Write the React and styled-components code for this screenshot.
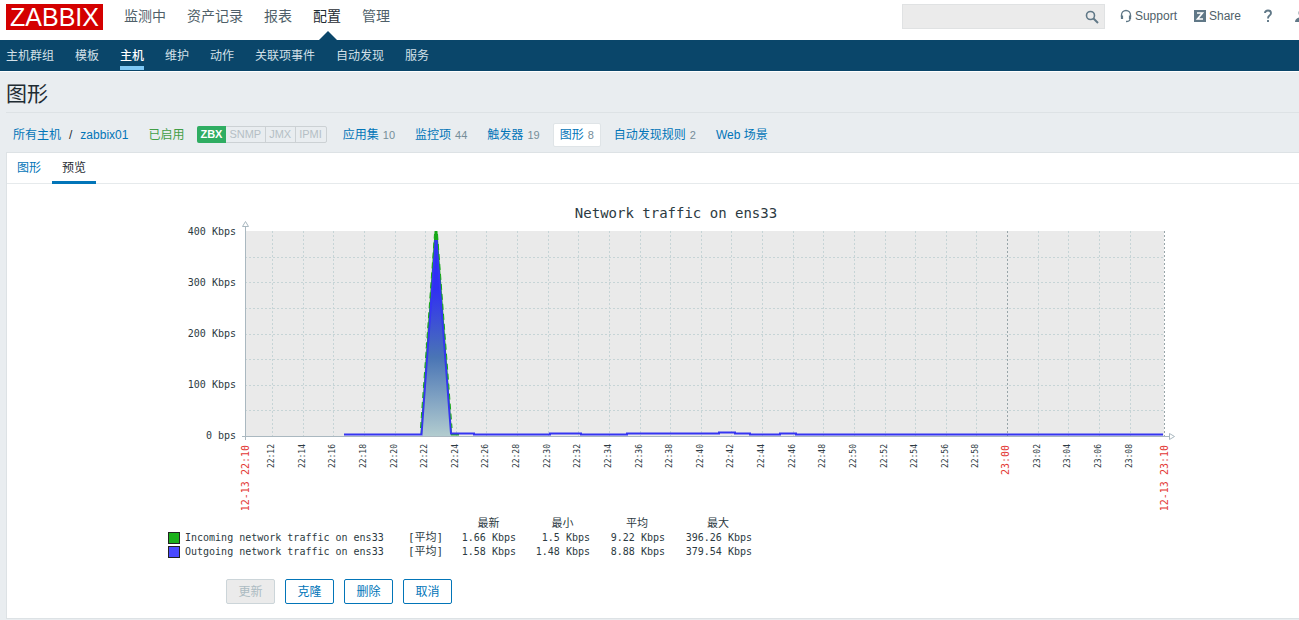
import React from "react";
import styled, { createGlobalStyle } from "styled-components";

const GlobalStyle = createGlobalStyle`
  * { box-sizing: border-box; }
  body {
    margin: 0;
    background: #e9edf0;
    color: #1f2c33;
    font: 12px/18px "Liberation Sans", "Noto Sans CJK SC", sans-serif;
    overflow-x: hidden;
  }
  a { color: #0275b8; text-decoration: none; }
  ul { list-style: none; margin: 0; padding: 0; }
`;

const TopBar = styled.header`
  display: flex;
  align-items: flex-start;
  height: 40px;
  padding: 4px 0 0 6px;
  background: #fff;
  overflow: hidden;
`;

const Logo = styled.a`
  width: 97px;
  height: 26px;
  background: #d40000;
  color: #fff;
  font-size: 25px;
  line-height: 27px;
  text-align: center;
`;

const MainNav = styled.nav`
  margin-left: 21px;
  flex: 1;
  ul { display: flex; gap: 21px; }
`;

const MainItem = styled.li`
  position: relative;
  height: 36px;
  font-size: 14px;
  line-height: 25px;
  white-space: nowrap;
  a { color: ${(p) => (p.$active ? "#1f2c33" : "#4f5f69")}; }
  ${(p) =>
    p.$active &&
    `&::after {
      content: "";
      position: absolute;
      left: 6px;
      bottom: 0;
      border: solid transparent;
      border-width: 0 9px 9px;
      border-bottom-color: #0a466a;
    }`}
`;

const SearchForm = styled.form`
  display: flex;
  width: 203px;
  height: 25px;
  background: #ebebeb;
  border: 1px solid #e0e2e3;
`;

const SearchInput = styled.input`
  flex: 1;
  min-width: 0;
  border: 0;
  background: transparent;
  outline: 0;
  font: inherit;
`;

const IconButton = styled.button`
  display: flex;
  align-items: center;
  border: 0;
  padding: 0 5px;
  background: transparent;
`;

const Tools = styled.div`
  display: flex;
  align-items: center;
  height: 24px;
  margin: 0 -9px 0 15px;
`;

const ToolLink = styled.a`
  display: flex;
  align-items: center;
  gap: 3px;
  margin-right: ${(p) => p.$gap}px;
  color: #4f5f69;
`;

const SubNav = styled.nav`
  background: #0a466a;
  border-bottom: 1px solid #fff;
  padding-left: 6px;
  ul { display: flex; gap: 21px; }
`;

const SubItem = styled.li`
  a {
    display: block;
    height: 31px;
    line-height: 32px;
    color: ${(p) => (p.$active ? "#fff" : "#d3e0e8")};
    font-weight: ${(p) => (p.$active ? 500 : 400)};
    white-space: nowrap;
    background: ${(p) =>
      p.$active ? "linear-gradient(#7fc8f5, #7fc8f5) 0 26px / 100% 4px no-repeat" : "none"};
  }
`;

const Title = styled.h1`
  margin: 0 0 0 6px;
  height: 41px;
  font-size: 21px;
  font-weight: 400;
  line-height: 43px;
  border-bottom: 1px solid #dde2e5;
`;

const HostBar = styled.div`
  display: flex;
  align-items: center;
  height: 39px;
  padding: 4px 0 0 7px;
  white-space: nowrap;
`;

const HostItem = styled.div`
  height: 24px;
  line-height: 22px;
  padding: 0 6px;
  margin-right: ${(p) => p.$gap}px;
  border: 1px solid ${(p) => (p.$active ? "#dfe4e7" : "transparent")};
  border-radius: 2px;
  background: ${(p) => (p.$active ? "#fff" : "transparent")};
  &:first-child { padding-left: 5px; }
`;

const Slash = styled.span`
  margin: 0 8px;
`;

const Enabled = styled.span`
  color: #429e47;
`;

const Count = styled.span`
  margin-left: 4px;
  color: #768d99;
  font-size: 11px;
`;

const Badges = styled.div`
  display: flex;
  height: 17px;
  margin-right: 9px;
  border: 1px solid #ccd1d4;
  border-radius: 2px;
`;

const Badge = styled.span`
  margin: ${(p) => (p.$on ? "-1px 0 -1px -1px" : "0")};
  padding: 0 4px 0 3px;
  line-height: ${(p) => (p.$on ? 17 : 15)}px;
  font-size: 11px;
  color: ${(p) => (p.$on ? "#fff" : "#b5bfc5")};
  background: ${(p) => (p.$on ? "#2fad62" : "transparent")};
  font-weight: ${(p) => (p.$on ? 700 : 400)};
  border-radius: 2px 0 0 2px;
  & + & + & { border-left: 1px solid #ccd1d4; border-radius: 0; }
`;

const Panel = styled.main`
  margin-left: 6px;
  background: #fff;
  border: 1px solid #dde2e5;
  border-right: 0;
`;

const Tabs = styled.ul`
  display: flex;
  gap: 1px;
  height: 31px;
  border-bottom: 1px solid #e6eaec;
`;

const Tab = styled.li`
  a {
    display: block;
    height: 31px;
    padding: 0 10px;
    line-height: 30px;
    color: ${(p) => (p.$active ? "#1f2c33" : "#0275b8")};
    border-bottom: ${(p) => (p.$active ? "3px solid #0275b8" : "0")};
  }
`;

const Figure = styled.figure`
  width: 1060px;
  margin: 0 auto;
  padding-top: 16px;
  svg { display: block; }
  text, table { font-family: "DejaVu Sans Mono", "Noto Sans CJK SC", monospace; }
`;

const Legend = styled.table`
  table-layout: fixed;
  width: 584px;
  margin: 5px 0 0 45px;
  border-collapse: collapse;
  font-size: 10px;
  line-height: 14px;
  color: #2c3a42;
  white-space: nowrap;
  th, td { padding: 0; height: 14px; font-weight: 400; text-align: right; }
  thead th { padding-left: 19px; text-align: center; font-size: 11px; }
  tbody th { text-align: left; }
  td:nth-child(2) { text-align: left; font-size: 11px; }
`;

const Swatch = styled.span`
  display: inline-block;
  width: 12px;
  height: 12px;
  margin-right: 5px;
  vertical-align: middle;
  border: 1px solid #222;
  background: ${(p) => p.$color};
`;

const Actions = styled.div`
  display: flex;
  gap: 10px;
  padding: 20px 0 14px 219px;
`;

const Button = styled.button`
  width: 49px;
  height: 25px;
  padding: 0;
  font: inherit;
  color: #0275b8;
  background: #fff;
  border: 1px solid #0275b8;
  border-radius: 2px;
  &:disabled {
    color: #acbbc2;
    background: #ebebeb;
    border-color: #ccd5d9;
  }
`;

const mainItems = ["监测中", "资产记录", "报表", "配置", "管理"];
const subItems = ["主机群组", "模板", "主机", "维护", "动作", "关联项事件", "自动发现", "服务"];
const hostLinks = [
  ["应用集", 10],
  ["监控项", 44],
  ["触发器", 19],
  ["图形", 8],
  ["自动发现规则", 2],
  ["Web 场景", null],
];
const series = [
  ["Incoming network traffic on ens33", "#1ab01a", "1.66 Kbps", "1.5 Kbps", "9.22 Kbps", "396.26 Kbps"],
  ["Outgoing network traffic on ens33", "#4a4aff", "1.58 Kbps", "1.48 Kbps", "8.88 Kbps", "379.54 Kbps"],
];

const plot = { left: 122, right: 1041, top: 31, bottom: 236 };
const ticks = Array.from({ length: 29 }, (_, i) => {
  const minutes = 12 + i * 2;
  const hour = 22 + Math.floor(minutes / 60);
  return {
    x: Math.round(149 + (i * 735) / 24),
    label: `${hour}:${String(minutes % 60).padStart(2, "0")}`,
    major: minutes === 60,
  };
});
const rows = Array.from({ length: 8 }, (_, i) => Math.round(plot.bottom - ((i + 1) * 205) / 8));

function TimeLabel({ x, major, children }) {
  return (
    <text
      transform={`translate(${x} ${major ? 245 : 244}) rotate(-90)`}
      textAnchor="end"
      fontSize={major ? 10 : 8}
      fill={major ? "#e33734" : "#2c3a42"}
    >
      {children}
    </text>
  );
}

function Chart() {
  return (
    <svg width="1060" height="312" viewBox="0 0 1060 312" role="img" aria-label="Network traffic on ens33">
      <defs>
        <linearGradient id="fill" x1="0" y1="40" x2="0" y2="236" gradientUnits="userSpaceOnUse">
          <stop offset="0" stopColor="#2d2dff" />
          <stop offset="0.25" stopColor="#3030f2" />
          <stop offset="0.6" stopColor="#4a75b5" />
          <stop offset="1" stopColor="#b2cccf" />
        </linearGradient>
      </defs>
      <text x="553" y="18" textAnchor="middle" fontSize="14" fill="#2c3a42">
        Network traffic on ens33
      </text>
      <rect x={plot.left} y={plot.top} width="919" height="205" fill="#eaeaea" />
      <g stroke="#c6d4d6" strokeDasharray="2 2" shapeRendering="crispEdges">
        {rows.slice(0, 7).map((y) => (
          <line key={y} x1={plot.left} x2={plot.right} y1={y + 0.5} y2={y + 0.5} />
        ))}
        {ticks.map((t) => (
          <line
            key={t.x}
            x1={t.x + 0.5}
            x2={t.x + 0.5}
            y1={plot.top}
            y2={plot.bottom}
            stroke={t.major ? "#98a5a9" : undefined}
          />
        ))}
        <line x1="1041.5" x2="1041.5" y1="31" y2="236" stroke="#98a5a9" />
      </g>
      {["400 Kbps", "300 Kbps", "200 Kbps", "100 Kbps", "0 bps"].map((label, i) => (
        <text key={label} x="113" y={35 + i * 51} textAnchor="end" fontSize="10" fill="#2c3a42">
          {label}
        </text>
      ))}
      <path
        d="M298.500 234 L312.500 32 H313.500 L328 234.500 H336"
        fill="none"
        stroke="#16a816"
        strokeWidth="2"
      />
      <path d="M299 236 L311.500 40 H314.500 L328 236Z" fill="url(#fill)" />
      <path
        d="M221 234.500 H298.500 L312.500 41 H313.500 L328 233.500 H351 V234.500 H427 V233.500 H458 V234.500 H504 V233.500 H596 V232.500 H612 V233.500 H627 V234.500 H657 V233.500 H673 V234.500 H1040"
        fill="none"
        stroke="#3535f2"
        strokeWidth="2"
      />
      <path
        d="M297.500 228 L311.500 34 M314.500 34 L329 228"
        fill="none"
        stroke="#16a816"
        strokeDasharray="6 4"
      />
      <path d="M122.500 27 V240 M119 236.500 H1047" stroke="#aab8c0" fill="none" />
      <path d="M119.500 26.500 L122.500 21.500 L125.500 26.500Z M1046.500 233.500 L1051.500 236.500 L1046.500 239.500Z" fill="#fff" stroke="#aab8c0" />
      {ticks.map((t) => (
        <TimeLabel key={t.label} x={t.x + 2} major={t.major}>
          {t.label}
        </TimeLabel>
      ))}
      <TimeLabel x={126} major>12-13 22:10</TimeLabel>
      <TimeLabel x={1045} major>12-13 23:10</TimeLabel>
    </svg>
  );
}

function LegendTable() {
  return (
    <Legend>
      <colgroup>
        {[240, 34, 74, 74, 75, 87].map((w, i) => (
          <col key={i} width={w} />
        ))}
      </colgroup>
      <thead>
        <tr>
          <td />
          <td />
          {["最新", "最小", "平均", "最大"].map((h) => (
            <th key={h} scope="col">{h}</th>
          ))}
        </tr>
      </thead>
      <tbody>
        {series.map(([name, color, ...values]) => (
          <tr key={name}>
            <th scope="row">
              <Swatch $color={color} />
              {name}
            </th>
            <td>[平均]</td>
            {values.map((v) => (
              <td key={v}>{v}</td>
            ))}
          </tr>
        ))}
      </tbody>
    </Legend>
  );
}

export default function App() {
  return (
    <>
      <GlobalStyle />
      <TopBar>
        <Logo href="#">ZABBIX</Logo>
        <MainNav>
          <ul>
            {mainItems.map((item) => (
              <MainItem key={item} $active={item === "配置"}>
                <a href="#">{item}</a>
              </MainItem>
            ))}
          </ul>
        </MainNav>
        <SearchForm>
          <SearchInput type="text" aria-label="搜索" />
          <IconButton type="button" aria-label="搜索">
            <svg width="14" height="14" viewBox="0 0 14 14" fill="none" stroke="#607887">
              <circle cx="5.500" cy="5.500" r="4" strokeWidth="1.600" />
              <path d="M8.500 8.500 L13 13" strokeWidth="2" />
            </svg>
          </IconButton>
        </SearchForm>
        <Tools>
          <ToolLink href="#" $gap={17}>
            <svg width="12" height="14" viewBox="0 0 12 14" fill="none" stroke="#607887">
              <path d="M1.500 8 V6 A4.500 4.500 0 0 1 10.500 6 V8" strokeWidth="1.300" />
              <path d="M2 6.500 V10 M10 6.500 V10" strokeWidth="2.200" />
              <path d="M10 10 Q10 12.500 6 12.500" strokeWidth="1.300" />
            </svg>
            Support
          </ToolLink>
          <ToolLink href="#" $gap={22}>
            <svg width="12" height="12" viewBox="0 0 12 12">
              <rect width="12" height="12" fill="#607887" />
              <path d="M3 3 H8.500 L3.500 9 H9" fill="none" stroke="#fff" strokeWidth="1.600" />
            </svg>
            Share
          </ToolLink>
          <ToolLink href="#" aria-label="帮助" $gap={22}>
            <svg width="10" height="14" viewBox="0 0 10 14" fill="none" stroke="#607887" strokeWidth="1.900">
              <path d="M2 4 Q2 1.500 5 1.500 Q8 1.500 8 4 Q8 5.500 6.500 6.500 Q5 7.500 5 9.500" />
              <path d="M5 11 V13" />
            </svg>
          </ToolLink>
          <ToolLink href="#" aria-label="用户" $gap={0}>
            <svg width="13" height="14" viewBox="0 0 13 14" fill="#607887">
              <circle cx="6.500" cy="4" r="3" />
              <path d="M0 13 Q0 9.500 4 8.500 H9 Q13 9.500 13 13Z" />
            </svg>
          </ToolLink>
        </Tools>
      </TopBar>
      <SubNav>
        <ul>
          {subItems.map((item) => (
            <SubItem key={item} $active={item === "主机"}>
              <a href="#">{item}</a>
            </SubItem>
          ))}
        </ul>
      </SubNav>
      <Title>图形</Title>
      <HostBar>
        <HostItem $gap={6}>
          <a href="#">所有主机</a>
          <Slash>/</Slash>
          <a href="#">zabbix01</a>
        </HostItem>
        <HostItem $gap={6}>
          <Enabled>已启用</Enabled>
        </HostItem>
        <Badges>
          <Badge $on>ZBX</Badge>
          <Badge>SNMP</Badge>
          <Badge>JMX</Badge>
          <Badge>IPMI</Badge>
        </Badges>
        {hostLinks.map(([label, count]) => (
          <HostItem key={label} $active={label === "图形"} $gap={6}>
            <a href="#">{label}</a>
            {count !== null && <Count>{count}</Count>}
          </HostItem>
        ))}
      </HostBar>
      <Panel>
        <Tabs>
          <Tab><a href="#">图形</a></Tab>
          <Tab $active><a href="#">预览</a></Tab>
        </Tabs>
        <Figure>
          <Chart />
          <LegendTable />
        </Figure>
        <Actions>
          <Button type="button" disabled>更新</Button>
          <Button type="button">克隆</Button>
          <Button type="button">删除</Button>
          <Button type="button">取消</Button>
        </Actions>
      </Panel>
    </>
  );
}
